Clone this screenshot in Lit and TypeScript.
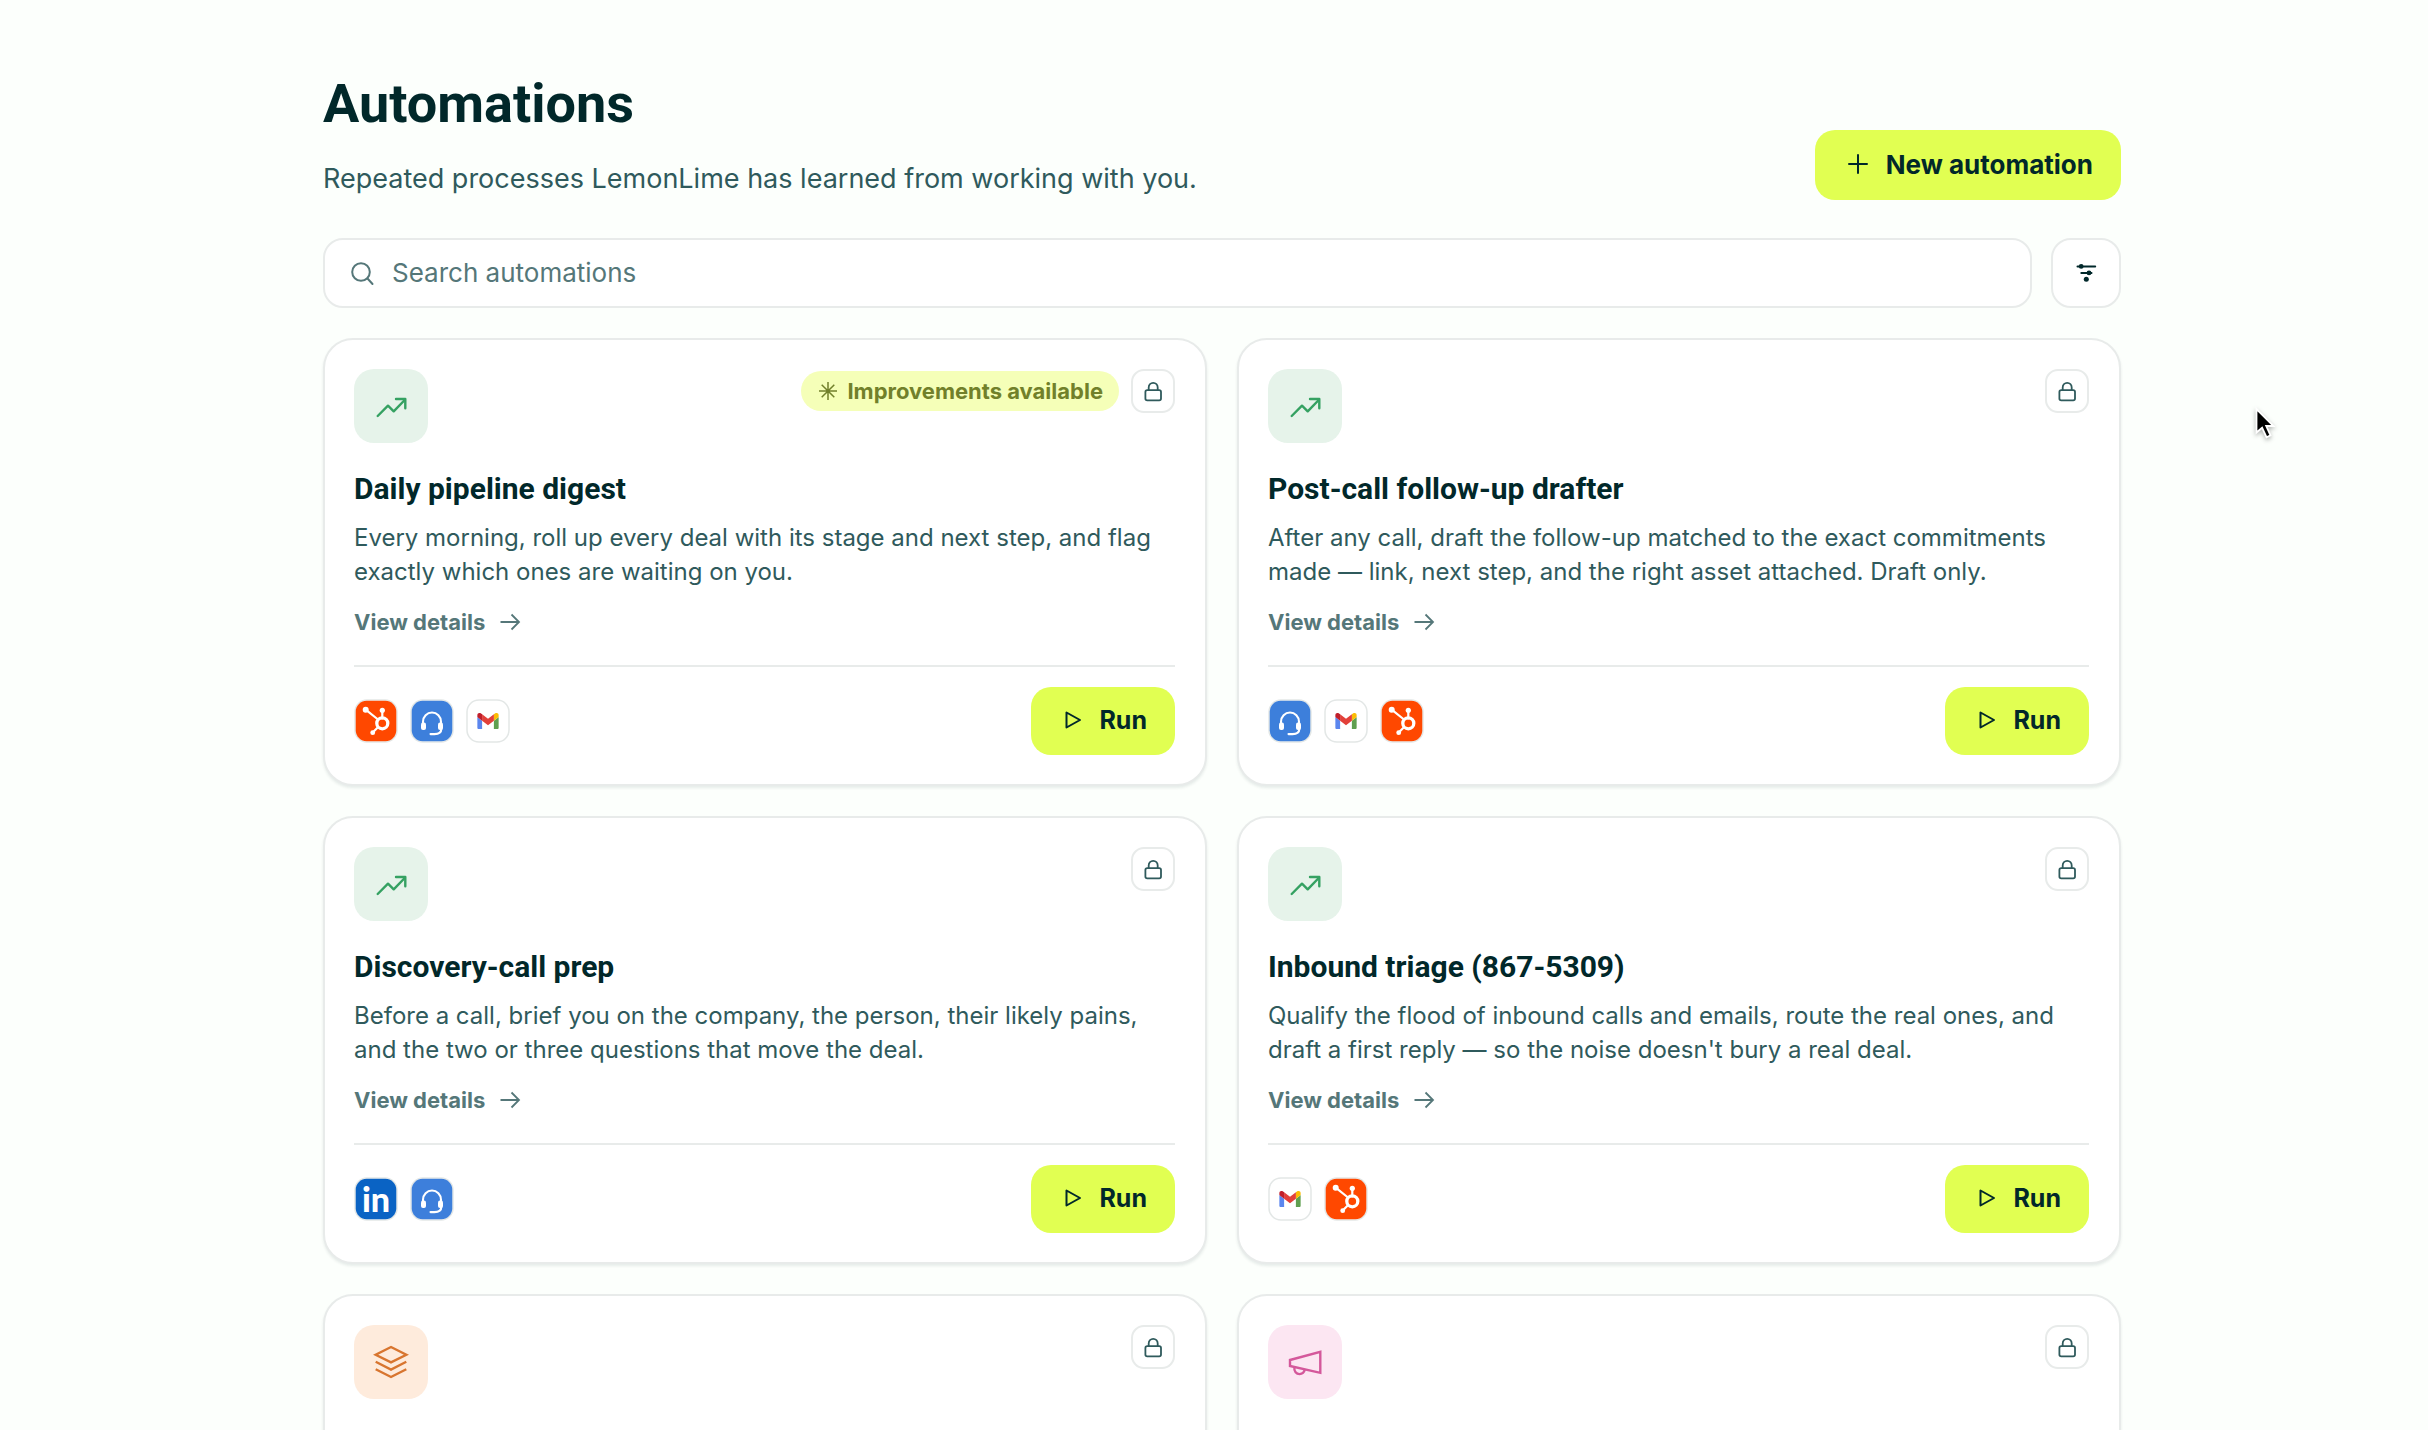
import { LitElement, html, css, svg, nothing } from "lit";
import { customElement, property } from "lit/decorators.js";

type AppName = "hubspot" | "calls" | "gmail" | "linkedin";
type Category = "sales" | "ops" | "marketing";

interface Automation {
  category: Category;
  title?: string;
  description?: string;
  apps?: AppName[];
  improvements?: boolean;
}

const AUTOMATIONS: Automation[] = [
  {
    category: "sales",
    title: "Daily pipeline digest",
    description: "Every morning, roll up every deal with its stage and next step, and flag exactly which ones are waiting on you.",
    apps: ["hubspot", "calls", "gmail"],
    improvements: true,
  },
  {
    category: "sales",
    title: "Post-call follow-up drafter",
    description: "After any call, draft the follow-up matched to the exact commitments made — link, next step, and the right asset attached. Draft only.",
    apps: ["calls", "gmail", "hubspot"],
  },
  {
    category: "sales",
    title: "Discovery-call prep",
    description: "Before a call, brief you on the company, the person, their likely pains, and the two or three questions that move the deal.",
    apps: ["linkedin", "calls"],
  },
  {
    category: "sales",
    title: "Inbound triage (867-5309)",
    description: "Qualify the flood of inbound calls and emails, route the real ones, and draft a first reply — so the noise doesn't bury a real deal.",
    apps: ["gmail", "hubspot"],
  },
  { category: "ops" },
  { category: "marketing" },
];

const categoryIcons = {
  sales: svg`<path d="M23.7 47 34 36.7l5.7 5.6L50.7 31"/><path d="M42 30h9.3v9.3"/>`,
  ops: svg`<path d="M37 22l15.3 7.7L37 37.3l-15.3-7.6z"/><path d="M21.7 36.8 37 44.6l15.3-7.8"/><path d="M21.7 44.2 37 52l15.3-7.8"/>`,
  marketing: svg`<path d="M22 35l30.3-8.2v21L22 41z"/><path d="M26.4 42.2c-.6 4 2 6.9 5.2 6.9 2.8 0 4.6-1.9 5.2-4.5"/>`,
};

const appIcons = {
  hubspot: html`<svg class="app" viewBox="0 0 44 44" role="img" aria-label="HubSpot">
    <rect class="app-ring" x="1" y="1" width="42" height="42" rx="12"/>
    <rect x="1.7" y="1.7" width="40.6" height="40.6" rx="11" fill="#ff4800"/>
    <g fill="none" stroke="#fff" stroke-linecap="round">
      <path stroke-width="2.2" d="M11.7 10.7 24 20.5M28.3 11.5v8M18.7 33.5l5-5"/>
      <circle cx="28.3" cy="24.3" r="5.5" stroke-width="3.3"/>
    </g>
    <g fill="#fff"><circle cx="11.7" cy="10.7" r="3"/><circle cx="28.3" cy="11.3" r="2.6"/><circle cx="18.7" cy="33.7" r="2.4"/></g>
  </svg>`,
  calls: html`<svg class="app" viewBox="0 0 44 44" role="img" aria-label="Calls">
    <rect class="app-ring" x="1" y="1" width="42" height="42" rx="12"/>
    <rect x="1.7" y="1.7" width="40.6" height="40.6" rx="11" fill="#3d7fdb"/>
    <g fill="none" stroke="#fff" stroke-width="2.1" stroke-linecap="round">
      <path d="M13 25v-2.3a9 9.2 0 0 1 18 0V25"/>
      <path d="M31.3 30c0 3.4-2.8 5.100-6.800 5.100h-4"/>
    </g>
    <rect x="11" y="23.6" width="5" height="7.4" rx="2" fill="#fff"/>
    <rect x="28" y="23.6" width="5" height="7.4" rx="2" fill="#fff"/>
  </svg>`,
  gmail: html`<svg class="app" viewBox="0 0 44 44" role="img" aria-label="Gmail">
    <rect class="app-ring" x="1" y="1" width="42" height="42" rx="12"/>
    <svg x="11.2" y="13.8" width="21.6" height="16.4" viewBox="52 42 88 66">
      <path fill="#5b86ee" d="M58 108h14V74L52 59v43c0 3.32 2.69 6 6 6"/>
      <path fill="#5f9f50" d="M120 108h14c3.32 0 6-2.69 6-6V59l-20 15"/>
      <path fill="#fbbc04" d="M120 48v26l20-15v-8c0-7.42-8.47-11.65-14.4-7.2"/>
      <path fill="#e2403a" d="M72 74V48l24 18 24-18v26L96 92"/>
      <path fill="#c01f2b" d="M52 51v8l20 15V48l-5.6-4.2c-5.94-4.45-14.4-.22-14.4 7.2"/>
    </svg>
  </svg>`,
  linkedin: html`<svg class="app" viewBox="0 0 44 44" role="img" aria-label="LinkedIn">
    <rect class="app-ring" x="1" y="1" width="42" height="42" rx="12"/>
    <rect x="1.7" y="1.7" width="40.6" height="40.6" rx="11" fill="#0a63c4"/>
    <text class="in" x="22" y="35" text-anchor="middle">in</text>
  </svg>`,
};

const base = css`
  * { box-sizing: border-box; }
  button, input { font: inherit; color: inherit; margin: 0; }
  button { cursor: pointer; }
  .primary {
    display: inline-flex;
    align-items: center;
    border: 0;
    border-radius: 20px;
    padding: 0 28px 2px;
    background: #e1ff52;
    color: #01282a;
    font-weight: 700;
    white-space: nowrap;
  }
  svg { display: block; flex: none; }
`;

@customElement("automation-card")
export class AutomationCard extends LitElement {
  static styles = [base, css`
    :host {
      display: flex;
      flex-direction: column;
      box-sizing: border-box;
      min-width: 0;
      padding: 29px 30px 29px 29px;
      background: #fff;
      border: 2px solid #e8ebea;
      border-radius: 30px;
      box-shadow: 0 2px 3px rgba(0, 43, 43, 0.09);
    }
    .top { display: flex; justify-content: space-between; align-items: flex-start; }
    .tile { width: 74px; height: 74px; border-radius: 20px; }
    .tile svg { width: 74px; height: 74px; fill: none; stroke: currentColor; stroke-width: 2.4; stroke-linecap: round; stroke-linejoin: round; }
    .sales { background: #e6f3ea; color: #35a162; }
    .ops { background: #feebdc; color: #d8752f; }
    .ops svg, .marketing svg { stroke-linejoin: miter; stroke-linecap: butt; }
    .marketing { background: #fce6f2; color: #d4589b; }
    .marks { display: flex; align-items: center; gap: 12px; }
    .badge {
      display: inline-flex;
      align-items: center;
      gap: 8px;
      height: 40px;
      padding: 0 16px;
      border-radius: 20px;
      background: #f5ffb8;
      color: #71802a;
      font-size: 22px;
      font-weight: 700;
      white-space: nowrap;
    }
    .badge svg { width: 22px; height: 22px; stroke: currentColor; stroke-width: 1.5; }
    .lock {
      width: 44px;
      height: 44px;
      padding: 0;
      border: 2px solid #e8ebea;
      border-radius: 13px;
      background: #fff;
      color: #2f5a5c;
    }
    .lock svg { width: 40px; height: 40px; fill: none; stroke: currentColor; stroke-width: 1.8; }
    h2 { margin: 28px 0 14px; font-family: Roboto, "Liberation Sans", sans-serif; font-size: 30px; line-height: 36px; font-weight: 700; color: #01282a; }
    p { margin: 0 0 18px; font-size: 24px; line-height: 34px; color: #2f5a5c; }
    .details {
      display: inline-flex;
      align-items: center;
      align-self: flex-start;
      gap: 14px;
      font-size: 22px;
      line-height: 30px;
      font-weight: 700;
      color: #557779;
      text-decoration: none;
    }
    .details svg { width: 22px; height: 22px; fill: none; stroke: currentColor; stroke-width: 1.8; }
    .foot {
      display: flex;
      align-items: center;
      justify-content: space-between;
      margin-top: 28px;
      padding-top: 20px;
      border-top: 2px solid #e8ebea;
    }
    .apps { display: flex; gap: 12px; }
    .app { width: 44px; height: 44px; }
    .app-ring { fill: #fff; stroke: #e3e7e6; stroke-width: 1.5; }
    .in { font: 900 34px Lato, sans-serif; fill: #fff; }
    .run { height: 68px; gap: 12px; font-size: 25px; }
    .run svg { width: 28px; height: 28px; fill: none; stroke: currentColor; stroke-width: 2; stroke-linejoin: round; }
  `];

  @property({ attribute: false }) item!: Automation;

  render() {
    const { category, title, description, apps, improvements } = this.item;
    return html`
      <div class="top">
        <div class="tile ${category}"><svg viewBox="0 0 74 74" aria-hidden="true">${categoryIcons[category]}</svg></div>
        <div class="marks">
          ${improvements ? html`<span class="badge">
            <svg viewBox="0 0 22 22" aria-hidden="true"><path d="M11 2v18M2 11h18M4.7 4.7l12.6 12.6M17.3 4.7 4.7 17.3"/></svg>Improvements available</span>` : nothing}
          <button class="lock" aria-label="Private">
            <svg viewBox="2 2 40 40" aria-hidden="true"><rect x="14.4" y="21.2" width="15.6" height="10.2" rx="1.8"/><path d="M17.7 21v-2.5a4.5 4.7 0 0 1 9 0V21"/></svg>
          </button>
        </div>
      </div>
      ${title ? html`
        <h2>${title}</h2>
        <p>${description}</p>
        <a class="details" href="#details">View details
          <svg viewBox="0 0 22 22" aria-hidden="true"><path d="M1.5 11h18M12.5 3.500 20 11l-7.500 7.500"/></svg>
        </a>
        <div class="foot">
          <div class="apps">${apps!.map((a) => appIcons[a])}</div>
          <button class="primary run">
            <svg viewBox="0 0 28 28" aria-hidden="true"><path d="M7.5 6.5v15L21 14z"/></svg>Run
          </button>
        </div>` : nothing}
    `;
  }
}

@customElement("app-root")
export class AppRoot extends LitElement {
  static styles = [base, css`
    :host {
      display: block;
      position: relative;
      height: 100vh;
      overflow: auto;
      scrollbar-width: none;
      background: #fcfffc;
      font-family: Inter, "Liberation Sans", sans-serif;
      color: #01282a;
    }
    main { padding: 74px 307px 30px 323px; }
    header { display: flex; justify-content: space-between; align-items: flex-end; gap: 30px; margin-bottom: 38px; }
    h1 { margin: 0 0 24px; font-family: Roboto, "Liberation Sans", sans-serif; font-size: 54px; line-height: 60px; font-weight: 700; }
    .lead { margin: 0; font-size: 27px; line-height: 42px; color: #2f5a5c; }
    .new { height: 70px; gap: 13px; font-size: 26px; }
    .new svg { width: 30px; height: 30px; stroke: currentColor; stroke-width: 2; stroke-linecap: round; }
    .tools { display: flex; gap: 19px; margin-bottom: 30px; }
    .search {
      flex: 1;
      display: flex;
      align-items: center;
      gap: 16px;
      height: 70px;
      padding: 0 24px;
      border: 2px solid #e8ebea;
      border-radius: 20px;
      background: #fff;
      color: #557779;
    }
    .search svg { width: 27px; height: 27px; fill: none; stroke: currentColor; stroke-width: 2; stroke-linecap: round; }
    input { flex: 1; min-width: 0; padding: 0; border: 0; outline: 0; background: none; font-size: 26px; line-height: 40px; color: #01282a; }
    input::placeholder { color: #557779; opacity: 1; }
    .filter { width: 70px; height: 70px; padding: 0; border: 2px solid #e8ebea; border-radius: 20px; background: #fff; color: #01282a; }
    .filter svg { width: 66px; height: 66px; fill: currentColor; stroke: currentColor; stroke-linecap: round; }
    .grid { display: grid; grid-template-columns: repeat(2, minmax(0, 1fr)); grid-auto-rows: 1fr; gap: 30px; }
    .cursor { position: absolute; left: 2253px; top: 405px; width: 26px; height: 36px; pointer-events: none; filter: drop-shadow(0 2px 2px rgba(0, 0, 0, 0.3)); }
    @media (max-width: 1800px) { main { padding-left: 40px; padding-right: 40px; } .cursor { display: none; } }
    @media (max-width: 1100px) { .grid { grid-template-columns: minmax(0, 1fr); } header { flex-wrap: wrap; } }
  `];

  render() {
    return html`
      <main>
        <header>
          <div>
            <h1>Automations</h1>
            <p class="lead">Repeated processes LemonLime has learned from working with you.</p>
          </div>
          <button class="primary new">
            <svg viewBox="0 0 30 30" aria-hidden="true"><path d="M15 6v18M6 15h18"/></svg>New automation
          </button>
        </header>
        <div class="tools">
          <label class="search">
            <svg viewBox="0 0 27 27" aria-hidden="true"><circle cx="12" cy="12" r="8.8"/><path d="m18.5 18.5 5 5.5"/></svg>
            <input type="text" placeholder="Search automations" aria-label="Search automations">
          </label>
          <button class="filter" aria-label="Filter">
            <svg viewBox="2 2 66 66" aria-hidden="true">
              <path stroke-width="2" d="M26.5 28.4h17.7M30.3 34.9h10.200"/>
              <g stroke="none"><circle cx="30.2" cy="28.4" r="2.4"/><circle cx="38" cy="34.9" r="2.4"/><circle cx="35.3" cy="41.3" r="2.5"/></g>
            </svg>
          </button>
        </div>
        <section class="grid">
          ${AUTOMATIONS.map((item) => html`<automation-card .item=${item}></automation-card>`)}
        </section>
      </main>
      <svg class="cursor" viewBox="0 0 26 36" aria-hidden="true">
        <path d="M3.5 4v23.5l5.6-4.8 4.4 9.5 4-1.8-4.3-9.4h7.3z" fill="#000" stroke="#fff" stroke-width="1.8"/>
      </svg>
    `;
  }
}
